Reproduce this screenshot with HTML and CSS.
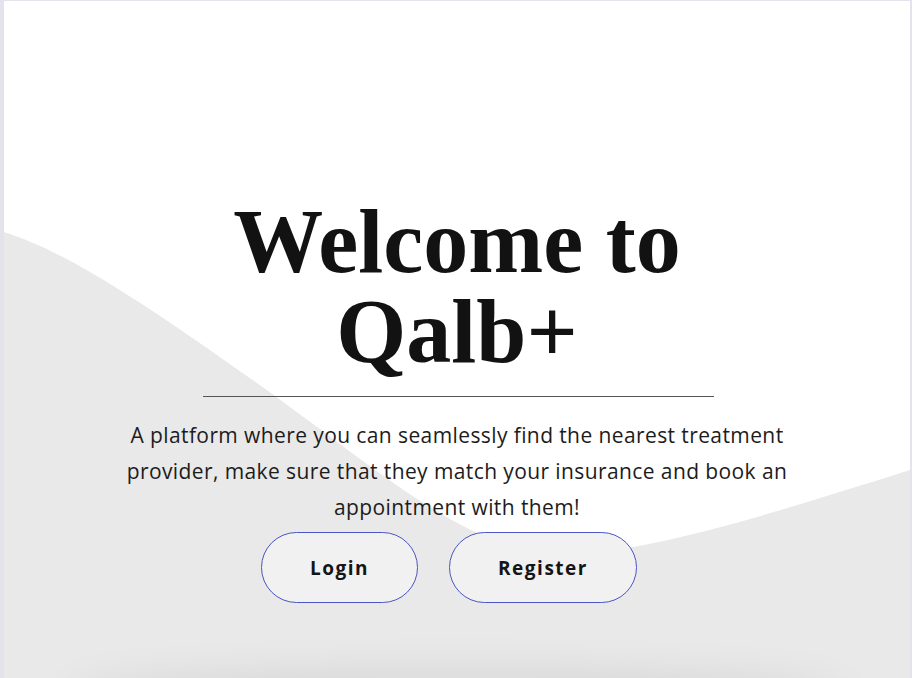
FILE: index.html
```html
<!DOCTYPE html>
<html lang="en">
<head>
<meta charset="utf-8">
<title>Qalb+</title>
<link rel="stylesheet" href="styles.css">
</head>
<body>
<div class="frame">
  <svg class="wave" viewBox="0 0 906 677" preserveAspectRatio="none" aria-hidden="true">
    <path d="M0 231 C60 250 130 295 250 380 C370 465 450 540 540 552 C620 560 760 515 906 469 L906 677 L0 677 Z" fill="#e9e9e9"/>
  </svg>
  <main class="hero">
    <h1 class="title">Welcome to<br>Qalb+</h1>
    <hr class="rule">
    <p class="lead">A platform where you can seamlessly find the nearest treatment provider, make sure that they match your insurance and book an appointment with them!</p>
    <div class="actions">
      <button class="btn">Login</button>
      <button class="btn">Register</button>
    </div>
  </main>
</div>
</body>
</html>
```
FILE: styles.css
```css
html, body {
  margin: 0;
  padding: 0;
  height: 100%;
}
body {
  background: #e3e3eb;
  overflow: hidden;
}
.frame {
  position: relative;
  margin: 1px 2px 0 4px;
  height: 677px;
  background: #ffffff;
  overflow: hidden;
}
.frame::after {
  content: "";
  position: absolute;
  left: 60px;
  right: 60px;
  bottom: -50px;
  height: 50px;
  border-radius: 50%;
  box-shadow: 0 -4px 44px rgba(0, 0, 0, 0.09);
}
.wave {
  position: absolute;
  left: 0;
  top: 0;
  width: 100%;
  height: 100%;
  display: block;
}
.hero {
  position: relative;
  z-index: 1;
  display: flex;
  flex-direction: column;
  align-items: center;
  padding-top: 196px;
}
.title {
  margin: 0;
  font-family: "Liberation Serif", "Times New Roman", serif;
  font-weight: 700;
  font-size: 90px;
  line-height: 90px;
  color: #121212;
  text-align: center;
}
.rule {
  width: 511px;
  margin: 19px 0 0 2px;
  border: 0;
  border-top: 1px solid #555555;
  height: 0;
}
.lead {
  width: 700px;
  margin: 20px 0 0 0;
  font-family: "Open Sans", "Noto Sans", sans-serif;
  font-size: 21px;
  letter-spacing: 0.4px;
  line-height: 36px;
  color: #1c1c1c;
  text-align: center;
}
.actions {
  display: flex;
  gap: 31px;
  margin-top: 7px;
  margin-left: -16px;
}
.btn {
  box-sizing: border-box;
  height: 71px;
  padding: 0 48px;
  border: 1px solid #4b55c4;
  border-radius: 36px;
  background: #f1f1f1;
  font-family: "Open Sans", "Noto Sans", sans-serif;
  font-weight: 700;
  font-size: 19px;
  letter-spacing: 1.5px;
  color: #151515;
  cursor: pointer;
}
```
